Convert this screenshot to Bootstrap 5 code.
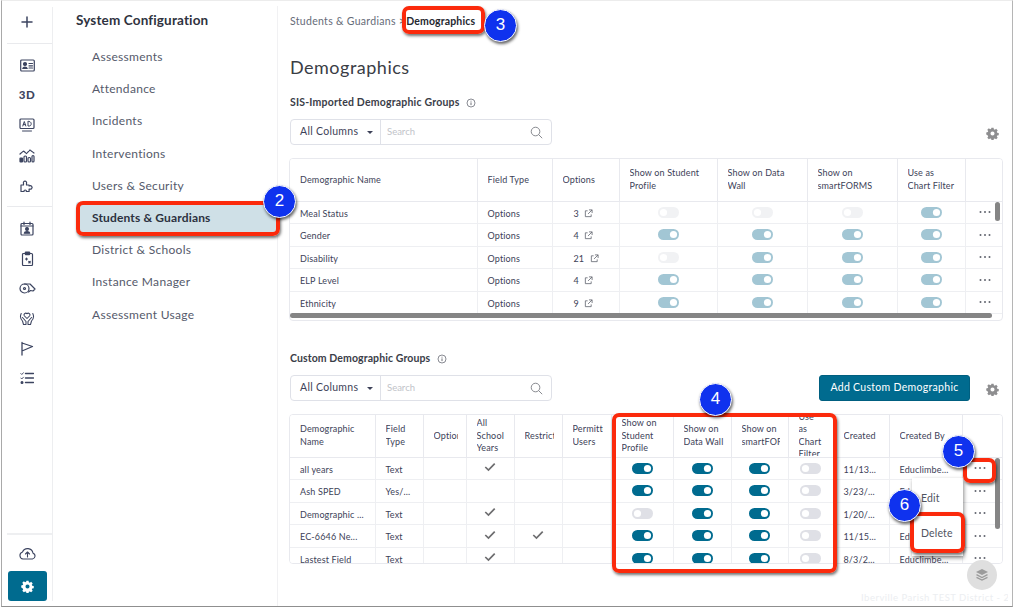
<!DOCTYPE html>
<html lang="en">
<head>
<meta charset="utf-8">
<title>Demographics</title>
<link href="https://cdn.jsdelivr.net/npm/bootstrap@5.3.0/dist/css/bootstrap.min.css" rel="stylesheet">
<style>
html,body{height:100%;overflow:hidden;background:#fff}
body{font-family:"Lato","Liberation Sans",sans-serif;color:#3d4258;letter-spacing:.15px}
.shell{position:relative;width:1012px;height:607px;margin-left:1px;border-left:1.5px solid #a9a9a9;border-bottom:1.5px solid #8f8f8f;border-right:1px solid #b5b5b5;border-top:1px solid #ececec;overflow:hidden;background:#fff}
.rail{width:51px;flex:none;margin-top:6px;margin-bottom:5px;border-right:1px solid #edeef0;color:#3c4460}
.rail-top{height:32px;margin-top:0}
.rail-sep{height:1px;background:#e9eaed;margin-left:5px;margin-top:6px}
.rail-group{padding-top:6px}
.rail-item{height:30px;display:flex;align-items:center;justify-content:center}
.rail-item svg{fill:none;stroke:#3c4460;stroke-width:1.2;stroke-linecap:round;stroke-linejoin:round}
.rail-3d{font-size:11.5px;font-weight:900;color:#3c4460;letter-spacing:.6px}
.rail-sep2{height:2px;background:#eeeff1;margin-left:5px}
.rail-cloud{height:36px;display:flex;align-items:center;justify-content:center}
.rail-cloud svg{fill:none;stroke:#3c4460;stroke-width:1.1;stroke-linecap:round;stroke-linejoin:round}
.rail-gear{width:39px;height:30px;margin-left:6px;background:#006b8f;border-radius:3px;display:flex;align-items:center;justify-content:center;border:0;padding:0}
.confnav{width:225px;flex:none;margin-top:5px;border-right:1px solid #f1f1f3;padding-left:23px}
.confnav-title{font-size:13.5px;font-weight:700;color:#2f3340;line-height:18px;margin-top:5px;margin-bottom:12px;letter-spacing:.15px}
.confnav-item{display:block;height:32.2px;line-height:32px;padding-left:16px;margin-right:-1px;font-size:12px;color:#555a6b;text-decoration:none;letter-spacing:.3px}
.confnav-item.sel{background:#cfe0e7;color:#2c3140;font-weight:700;border-radius:3px;letter-spacing:.15px}
.content{flex:1;min-width:0;padding:12px 8px 0 12px}
.crumbs{font-size:10.5px;line-height:16px;color:#666b78;letter-spacing:.3px}
.crumbs b{color:#25282f;font-weight:700;letter-spacing:.15px;margin-left:-2px}
.page-head{font-size:18px;font-weight:400;line-height:24px;color:#3a3d45;margin:26px 0 0;letter-spacing:.5px}
.sec-head{font-size:10.5px;font-weight:700;line-height:14px;color:#3a3d48;margin:16px 0 0;letter-spacing:.2px}
.sec-head.sec-b{margin-top:30px;letter-spacing:.1px}
.sec-head svg,.cog svg{vertical-align:-2px}
.tools{margin-top:10px;height:26px}
.filterbox{width:262px;height:26px;border:1px solid #dfe1e8;border-radius:4px;font-size:10.5px;background:#fff}
.filter-sel{width:90px;flex:none;height:100%;border-right:1px solid #dfe1e8;padding-left:9px;color:#3d4258;letter-spacing:.3px;font-size:10.5px}
.filter-caret{width:0;height:0;border-left:3.5px solid transparent;border-right:3.5px solid transparent;border-top:3.5px solid #3d4258;margin-left:auto;margin-right:7px}
.filter-input{flex:1;min-width:0;border:0;background:transparent;font-size:9.5px;padding:0 0 0 6px;color:#bbb;outline:0}
.filter-input::placeholder{color:#c1c3c9;opacity:1}
.cog{color:#8e8e90;margin-right:5px}
.add-btn{background:#006b8f;border:1px solid #005f80;color:#fff;font-size:10.5px;height:26px;width:151px;padding:0;border-radius:3px;margin-right:16px;letter-spacing:.3px}
.add-btn:hover{background:#006b8f;color:#fff}
.gridbox{position:relative;width:714px;margin-top:13px;margin-left:-1px;border:1px solid #e8e9ee;border-radius:4px;overflow:hidden;background:#fff}
.gridbox-a{height:163px}
.gridbox-b{height:150px}
.gridtab{table-layout:fixed;width:714px;margin:0;font-size:9px;color:#3d4258;border-collapse:collapse}
.gridtab th,.gridtab td{border:0;border-right:1px solid #eeeff2;border-bottom:1px solid #eeeff2;padding:3px 9px 0 10px;vertical-align:middle;white-space:nowrap;font-weight:400;color:#3d4258;background:#fff;box-shadow:none}
.gridtab th{height:42px;padding:0;white-space:normal;border-bottom-color:#e8e9ee;line-height:12.3px;border-right-color:#e8e9ee}
.gridtab td{height:22.5px;line-height:12px}
.gridtab tr>*:last-child{border-right:0}
.th-in{height:41px;display:flex;align-items:center;overflow:hidden;margin:0 9px 0 10px}
.th-in.q{margin-right:8px}
.th-in.w{margin-right:6px}
.gridtab td.num-link{padding-left:21px}
.num-link svg{margin-left:3px;vertical-align:-1px}
.cellc{text-align:center;padding:0!important}
.tog.form-check-input{float:none;margin:0;width:21px;height:11px;border:0;border-radius:6px;display:block;margin-left:auto;margin-right:auto;box-shadow:none;background-position:left center;background-size:contain;background-image:url("data:image/svg+xml,%3csvg xmlns='http://www.w3.org/2000/svg' viewBox='-4 -4 8 8'%3e%3ccircle r='2.6' fill='%23fff'/%3e%3c/svg%3e");background-color:#dfe0e6}
.tog.form-check-input:checked{background-position:right center;background-color:#006b8f}
.tog-pale.form-check-input{background-color:#f1f2f4}
.tog-pale.form-check-input:checked{background-color:#a2c6d4}
.gridtab .dots{display:block;margin:0 auto;fill:#62656f}
.gridbox-b.gridbox .dots{margin-left:11px}
.checkmk{fill:none;stroke:#6e6e70;stroke-width:2;display:block;margin:-2px auto 0}
.sb-h{position:absolute;left:0;bottom:2px;width:702px;height:5px;background:#858585;border-radius:3px}
.sb-v{position:absolute;right:2px;width:5px;background:#858585;border-radius:3px}
.sb-v1{top:43px;height:19px}
.sb-v2{top:43px;height:71px}
.ca2{width:75px}.ca3{width:67px}.ca4{width:98px}.ca5{width:90px}.ca6{width:90px}.ca7{width:68px}.ca8{width:39px}
.ca0{width:187px}
.cb1{width:85px}.cb2{width:48px}.cb3{width:43px}.cb4{width:48px}.cb5{width:48px}.cb6{width:49px}.cb7{width:62px}.cb8{width:58px}.cb9{width:57px}.cb10{width:45px}.cb11{width:56px}.cb12{width:73px}.cb13{width:42px}
.flyout{position:absolute;left:910px;top:477px;width:51px;height:78px;background:#fff;box-shadow:1px 2px 4px rgba(0,0,0,.45);font-size:10.5px;color:#50545f;z-index:3;padding-top:8px}
.flyout a{display:block;padding-left:9px;height:35px;line-height:24px;color:#50545f;text-decoration:none}
.hilite{position:absolute;border:4px solid #fb2a0c;border-radius:7px;box-shadow:1px 2px 3px rgba(0,0,0,.55);z-index:4;pointer-events:none}
.h2{left:74px;top:200px;width:204px;height:35px}
.h3{left:400px;top:5px;width:83px;height:28px}
.h4{left:610px;top:412px;width:225px;height:160px}
.h5{left:961px;top:457px;width:33px;height:25px}
.h6{left:908px;top:511px;width:55px;height:41px}
.pin{position:absolute;width:33px;height:33px;border-radius:50%;background:#0f32ee;border:1.5px solid #fff;box-shadow:1px 2px 3px rgba(0,0,0,.6);color:#fff;font:400 17px/30px "Liberation Sans",sans-serif;letter-spacing:0;text-align:center;z-index:5}
.p2{left:261px;top:184px}
.p3{left:482px;top:8px}
.p4{left:697px;top:382px}
.p5{left:940px;top:434px}
.p6{left:886px;top:488px}
.fab{position:absolute;left:965px;top:559px;width:30px;height:30px;border-radius:50%;background:#dfdfdf;display:flex;align-items:center;justify-content:center;z-index:2}
.tenant{position:absolute;left:859px;top:590px;width:147px;overflow:hidden;white-space:nowrap;font-size:9.5px;color:#eceef1;line-height:14px;letter-spacing:.5px}
</style>
</head>
<body>
<svg width="0" height="0" class="position-absolute">
<defs>
<symbol id="i-dots" viewBox="0 0 12 4"><circle cx="1.5" cy="2" r="1"/><circle cx="6" cy="2" r="1"/><circle cx="10.5" cy="2" r="1"/></symbol>
<symbol id="i-ext" viewBox="0 0 10 10"><path d="M4 2H1.5v6.5H8V6M5.5 1H9v3.500M9 1 4.500 5.500" fill="none" stroke="#62656f" stroke-width=".9"/></symbol>
<symbol id="i-check" viewBox="0 0 14 11"><path d="M1.500 5.500 5.200 9 12.500 1.500"/></symbol>
<symbol id="i-gear" viewBox="0 0 16 16"><path fill="currentColor" fill-rule="evenodd" d="M6.700 1h2.600l.4 1.900 1.200.5 1.600-1.100 1.900 1.900-1.100 1.600.5 1.200 1.900.4v2.600l-1.900.4-.5 1.200 1.100 1.600-1.900 1.900-1.600-1.100-1.200.5-.4 1.900H6.700l-.4-1.900-1.200-.5-1.600 1.100-1.900-1.900 1.100-1.600-.5-1.200L.3 9.300V6.700l1.900-.4.500-1.200L1.600 3.500l1.900-1.900 1.600 1.100 1.200-.5zM8 5.500a2.500 2.500 0 1 0 0 5 2.500 2.500 0 0 0 0-5z"/></symbol>
<symbol id="i-info" viewBox="0 0 12 12"><circle cx="6" cy="6" r="4.800" fill="none" stroke="#62656f" stroke-width=".9"/><path d="M6 5.300v3.200M6 3.300v1" stroke="#62656f" stroke-width="1.100"/></symbol>
<symbol id="i-search" viewBox="0 0 16 16"><circle cx="6.800" cy="6.800" r="5.300" fill="none" stroke="#6d6f76" stroke-width="1"/><path d="m10.700 10.700 4.300 4.300" stroke="#6d6f76" stroke-width="1"/></symbol>
</defs>
</svg>

<div class="shell d-flex">
  <aside class="rail d-flex flex-column">
    <div class="rail-item rail-top"><svg width="12" height="12" viewBox="0 0 12 12"><path d="M6 1v10M1 6h10" stroke-width="1.500"/></svg></div>
    <div class="rail-sep"></div>
    <div class="rail-group">
      <div class="rail-item"><svg width="15" height="13" viewBox="0 0 15 13"><rect x=".7" y="1" width="13.600" height="11" rx="1"/><circle cx="5" cy="5" r="1.500" fill="#3c4460"/><path d="M2.800 9.500c.3-2 4-2 4.400 0zM9 4.500h3.500M9 6.800h3.500M9 9h3.500" fill="#3c4460"/></svg></div>
      <div class="rail-item"><span class="rail-3d">3D</span></div>
      <div class="rail-item"><svg width="16" height="15" viewBox="0 0 16 15"><rect x="1" y="1" width="14" height="9.500" rx="1"/><path d="M3.800 8 5.300 3.500 6.800 8M4.300 6.600h2M9 3.500V8h1.300c2.600 0 2.600-4.500 0-4.500zM3.500 13h9" stroke-width="1"/></svg></div>
      <div class="rail-item"><svg width="16" height="15" viewBox="0 0 16 15"><path d="M1 6l3.500-3 3 2.500L11 2l4 3" stroke-dasharray="1.600 .9"/><rect x="1" y="10" width="2.500" height="4" rx=".5" fill="#3c4460"/><rect x="5" y="8" width="2.500" height="6" rx="1"/><rect x="9" y="9.500" width="2.500" height="4.500" rx="1"/><rect x="13" y="7.500" width="2" height="6.500" rx="1"/></svg></div>
      <div class="rail-item"><svg width="15" height="15" viewBox="0 0 15 15"><path d="M1 7h2.500V5.200a1.600 1.600 0 1 1 3 0V7h2.600v1a1.700 1.700 0 1 1 2.200 3c-.5.300-1.200 0-2.200 0v2.500H6.300c.5-2-2.600-2-2.300 0H1z"/></svg></div>
    </div>
    <div class="rail-sep"></div>
    <div class="rail-group">
      <div class="rail-item"><svg width="14" height="15" viewBox="0 0 14 15"><rect x="1" y="2.500" width="12" height="11.500" rx="1"/><path d="M4 1v2.500M10 1v2.500M1 5h12"/><circle cx="7" cy="8" r="1.400" fill="#3c4460"/><path d="M4.300 12.200c.3-2 5.100-2 5.400 0z" fill="#3c4460"/></svg></div>
      <div class="rail-item"><svg width="13" height="15" viewBox="0 0 13 15"><rect x="1.500" y="2.500" width="10" height="12" rx="1"/><rect x="4.300" y="1" width="4.400" height="2.600" rx=".6" fill="#3c4460"/><path d="M4.500 8h2M5.500 7v2M7.800 10.500l1.400 1.400M9.200 10.500l-1.400 1.400"/></svg></div>
      <div class="rail-item"><svg width="17" height="13" viewBox="0 0 17 13"><circle cx="5.500" cy="6.500" r="4.500"/><path d="M5.500 2H11l5 5-2 2-2.500-.5-2 1.500"/><circle cx="5.500" cy="6.500" r="1"/></svg></div>
      <div class="rail-item"><svg width="16" height="15" viewBox="0 0 16 15"><path d="M8 7.500 5.500 5a1.700 1.700 0 0 1 2.500-2.300A1.700 1.700 0 0 1 10.500 5zM2.200 2.500C.8 5.500 1.500 8 3.500 10l1 3.500H7v-3L3.500 6.500M13.800 2.500c1.400 3 .7 5.500-1.300 7.500l-1 3.500H9v-3l3.500-4" stroke-width="1.050"/></svg></div>
      <div class="rail-item"><svg width="14" height="15" viewBox="0 0 14 15"><path d="M2 1.500v12.500M2 2l10.500 3.500L2 10" stroke-width="1.300"/></svg></div>
      <div class="rail-item"><svg width="14" height="12" viewBox="0 0 14 12"><path d="M5.500 1.500H13.500M5.500 6H13.500M5.500 10.500H13.500" stroke-width="1.400"/><path d="M.8 1.500l1 1L3.400.7M.8 6l1 1 1.600-1.800" stroke-width=".9"/><circle cx="2" cy="10.500" r=".9" fill="#3c4460"/></svg></div>
    </div>
    <div class="mt-auto rail-sep2"></div>
    <div class="rail-cloud"><svg width="17" height="13" viewBox="0 0 17 13"><path d="M4 12h9.500a3 3 0 0 0 .5-5.800A5.500 5.500 0 0 0 3.500 5 3.600 3.600 0 0 0 4 12zM8.500 10V5M6.500 7l2-2 2 2"/></svg></div>
    <button class="rail-gear" type="button" aria-label="Settings"><svg width="13" height="13" class="text-white"><use href="#i-gear"/></svg></button>
  </aside>

  <nav class="confnav">
    <div class="confnav-title">System Configuration</div>
    <a class="confnav-item" href="#">Assessments</a>
    <a class="confnav-item" href="#">Attendance</a>
    <a class="confnav-item" href="#">Incidents</a>
    <a class="confnav-item" href="#">Interventions</a>
    <a class="confnav-item" href="#">Users &amp; Security</a>
    <a class="confnav-item sel" href="#">Students &amp; Guardians</a>
    <a class="confnav-item" href="#">District &amp; Schools</a>
    <a class="confnav-item" href="#">Instance Manager</a>
    <a class="confnav-item" href="#">Assessment Usage</a>
  </nav>

  <main class="content">
    <div class="crumbs">Students &amp; Guardians &gt; <b>Demographics</b></div>
    <h1 class="page-head">Demographics</h1>

    <h2 class="sec-head">SIS-Imported Demographic Groups <svg width="10" height="10" class="ms-1"><use href="#i-info"/></svg></h2>
    <div class="tools d-flex align-items-center justify-content-between">
      <div class="filterbox d-flex align-items-center">
        <div class="filter-sel d-flex align-items-center">All Columns<span class="filter-caret"></span></div>
        <input class="filter-input" placeholder="Search" aria-label="Search">
        <svg width="13" height="13" class="me-2 flex-none"><use href="#i-search"/></svg>
      </div>
      <span class="cog"><svg width="13" height="13"><use href="#i-gear"/></svg></span>
    </div>
    <div class="gridbox gridbox-a">
      <table class="table gridtab">
        <colgroup><col class="ca0"><col class="ca2"><col class="ca3"><col class="ca4"><col class="ca5"><col class="ca6"><col class="ca7"><col class="ca8"></colgroup>
        <thead><tr>
          <th><div class="th-in">Demographic Name</div></th><th><div class="th-in">Field Type</div></th><th><div class="th-in">Options</div></th><th><div class="th-in">Show on Student Profile</div></th><th><div class="th-in">Show on Data Wall</div></th><th><div class="th-in">Show on smartFORMS</div></th><th><div class="th-in">Use as Chart Filter</div></th><th></th>
        </tr></thead>
        <tbody>
          <tr><td>Meal Status</td><td>Options</td><td class="num-link">3 <svg width="9" height="9"><use href="#i-ext"/></svg></td><td class="cellc"><input class="form-check-input tog tog-pale" type="checkbox" role="switch" aria-label="Profile"></td><td class="cellc"><input class="form-check-input tog tog-pale" type="checkbox" role="switch" aria-label="Wall"></td><td class="cellc"><input class="form-check-input tog tog-pale" type="checkbox" role="switch" aria-label="Forms"></td><td class="cellc"><input class="form-check-input tog tog-pale" type="checkbox" role="switch" aria-label="Filter" checked></td><td class="cellc"><svg class="dots" width="12" height="4"><use href="#i-dots"/></svg></td></tr>
          <tr><td>Gender</td><td>Options</td><td class="num-link">4 <svg width="9" height="9"><use href="#i-ext"/></svg></td><td class="cellc"><input class="form-check-input tog tog-pale" type="checkbox" role="switch" aria-label="Profile" checked></td><td class="cellc"><input class="form-check-input tog tog-pale" type="checkbox" role="switch" aria-label="Wall" checked></td><td class="cellc"><input class="form-check-input tog tog-pale" type="checkbox" role="switch" aria-label="Forms" checked></td><td class="cellc"><input class="form-check-input tog tog-pale" type="checkbox" role="switch" aria-label="Filter" checked></td><td class="cellc"><svg class="dots" width="12" height="4"><use href="#i-dots"/></svg></td></tr>
          <tr><td>Disability</td><td>Options</td><td class="num-link">21 <svg width="9" height="9"><use href="#i-ext"/></svg></td><td class="cellc"><input class="form-check-input tog tog-pale" type="checkbox" role="switch" aria-label="Profile"></td><td class="cellc"><input class="form-check-input tog tog-pale" type="checkbox" role="switch" aria-label="Wall" checked></td><td class="cellc"><input class="form-check-input tog tog-pale" type="checkbox" role="switch" aria-label="Forms" checked></td><td class="cellc"><input class="form-check-input tog tog-pale" type="checkbox" role="switch" aria-label="Filter" checked></td><td class="cellc"><svg class="dots" width="12" height="4"><use href="#i-dots"/></svg></td></tr>
          <tr><td>ELP Level</td><td>Options</td><td class="num-link">4 <svg width="9" height="9"><use href="#i-ext"/></svg></td><td class="cellc"><input class="form-check-input tog tog-pale" type="checkbox" role="switch" aria-label="Profile" checked></td><td class="cellc"><input class="form-check-input tog tog-pale" type="checkbox" role="switch" aria-label="Wall" checked></td><td class="cellc"><input class="form-check-input tog tog-pale" type="checkbox" role="switch" aria-label="Forms" checked></td><td class="cellc"><input class="form-check-input tog tog-pale" type="checkbox" role="switch" aria-label="Filter" checked></td><td class="cellc"><svg class="dots" width="12" height="4"><use href="#i-dots"/></svg></td></tr>
          <tr><td>Ethnicity</td><td>Options</td><td class="num-link">9 <svg width="9" height="9"><use href="#i-ext"/></svg></td><td class="cellc"><input class="form-check-input tog tog-pale" type="checkbox" role="switch" aria-label="Profile" checked></td><td class="cellc"><input class="form-check-input tog tog-pale" type="checkbox" role="switch" aria-label="Wall" checked></td><td class="cellc"><input class="form-check-input tog tog-pale" type="checkbox" role="switch" aria-label="Forms" checked></td><td class="cellc"><input class="form-check-input tog tog-pale" type="checkbox" role="switch" aria-label="Filter" checked></td><td class="cellc"><svg class="dots" width="12" height="4"><use href="#i-dots"/></svg></td></tr>
        </tbody>
      </table>
      <span class="sb-h"></span><span class="sb-v sb-v1"></span>
    </div>

    <h2 class="sec-head sec-b">Custom Demographic Groups <svg width="10" height="10" class="ms-1"><use href="#i-info"/></svg></h2>
    <div class="tools d-flex align-items-center">
      <div class="filterbox d-flex align-items-center">
        <div class="filter-sel d-flex align-items-center">All Columns<span class="filter-caret"></span></div>
        <input class="filter-input" placeholder="Search" aria-label="Search">
        <svg width="13" height="13" class="me-2 flex-none"><use href="#i-search"/></svg>
      </div>
      <button class="btn add-btn ms-auto" type="button">Add Custom Demographic</button>
      <span class="cog"><svg width="13" height="13"><use href="#i-gear"/></svg></span>
    </div>
    <div class="gridbox gridbox-b">
      <table class="table gridtab">
        <colgroup><col class="cb1"><col class="cb2"><col class="cb3"><col class="cb4"><col class="cb5"><col class="cb6"><col class="cb7"><col class="cb8"><col class="cb9"><col class="cb10"><col class="cb11"><col class="cb12"><col class="cb13"></colgroup>
        <thead><tr>
          <th><div class="th-in">Demographic Name</div></th><th><div class="th-in">Field Type</div></th><th><div class="th-in q">Options</div></th><th><div class="th-in">All School Years</div></th><th><div class="th-in q">Restricted</div></th><th><div class="th-in q">Permitted Users</div></th><th><div class="th-in">Show on Student Profile</div></th><th><div class="th-in w">Show on Data Wall</div></th><th><div class="th-in q">Show on smartFORMS</div></th><th><div class="th-in">Use as Chart Filter</div></th><th><div class="th-in">Created</div></th><th><div class="th-in">Created By</div></th><th></th>
        </tr></thead>
        <tbody>
          <tr><td>all years</td><td>Text</td><td></td><td class="cellc"><svg class="checkmk" width="12" height="10"><use href="#i-check"/></svg></td><td></td><td></td><td class="cellc"><input class="form-check-input tog" type="checkbox" role="switch" aria-label="Profile" checked></td><td class="cellc"><input class="form-check-input tog" type="checkbox" role="switch" aria-label="Wall" checked></td><td class="cellc"><input class="form-check-input tog" type="checkbox" role="switch" aria-label="Forms" checked></td><td class="cellc"><input class="form-check-input tog" type="checkbox" role="switch" aria-label="Filter"></td><td>11/13...</td><td>Educlimbe...</td><td class="cellc"><svg class="dots" width="12" height="4"><use href="#i-dots"/></svg></td></tr>
          <tr><td>Ash SPED</td><td>Yes/...</td><td></td><td></td><td></td><td></td><td class="cellc"><input class="form-check-input tog" type="checkbox" role="switch" aria-label="Profile" checked></td><td class="cellc"><input class="form-check-input tog" type="checkbox" role="switch" aria-label="Wall" checked></td><td class="cellc"><input class="form-check-input tog" type="checkbox" role="switch" aria-label="Forms" checked></td><td class="cellc"><input class="form-check-input tog" type="checkbox" role="switch" aria-label="Filter"></td><td>3/23/...</td><td>Educlimbe...</td><td class="cellc"><svg class="dots" width="12" height="4"><use href="#i-dots"/></svg></td></tr>
          <tr><td>Demographic ...</td><td>Text</td><td></td><td class="cellc"><svg class="checkmk" width="12" height="10"><use href="#i-check"/></svg></td><td></td><td></td><td class="cellc"><input class="form-check-input tog" type="checkbox" role="switch" aria-label="Profile"></td><td class="cellc"><input class="form-check-input tog" type="checkbox" role="switch" aria-label="Wall" checked></td><td class="cellc"><input class="form-check-input tog" type="checkbox" role="switch" aria-label="Forms" checked></td><td class="cellc"><input class="form-check-input tog" type="checkbox" role="switch" aria-label="Filter"></td><td>1/20/...</td><td>Educlimbe...</td><td class="cellc"><svg class="dots" width="12" height="4"><use href="#i-dots"/></svg></td></tr>
          <tr><td>EC-6646 Ne...</td><td>Text</td><td></td><td class="cellc"><svg class="checkmk" width="12" height="10"><use href="#i-check"/></svg></td><td class="cellc"><svg class="checkmk" width="12" height="10"><use href="#i-check"/></svg></td><td></td><td class="cellc"><input class="form-check-input tog" type="checkbox" role="switch" aria-label="Profile" checked></td><td class="cellc"><input class="form-check-input tog" type="checkbox" role="switch" aria-label="Wall" checked></td><td class="cellc"><input class="form-check-input tog" type="checkbox" role="switch" aria-label="Forms" checked></td><td class="cellc"><input class="form-check-input tog" type="checkbox" role="switch" aria-label="Filter"></td><td>11/15...</td><td>Educlimbe...</td><td class="cellc"><svg class="dots" width="12" height="4"><use href="#i-dots"/></svg></td></tr>
          <tr><td>Lastest Field</td><td>Text</td><td></td><td class="cellc"><svg class="checkmk" width="12" height="10"><use href="#i-check"/></svg></td><td></td><td></td><td class="cellc"><input class="form-check-input tog" type="checkbox" role="switch" aria-label="Profile" checked></td><td class="cellc"><input class="form-check-input tog" type="checkbox" role="switch" aria-label="Wall" checked></td><td class="cellc"><input class="form-check-input tog" type="checkbox" role="switch" aria-label="Forms" checked></td><td class="cellc"><input class="form-check-input tog" type="checkbox" role="switch" aria-label="Filter"></td><td>8/3/2...</td><td>Educlimbe...</td><td class="cellc"><svg class="dots" width="12" height="4"><use href="#i-dots"/></svg></td></tr>
        </tbody>
      </table>
      <span class="sb-v sb-v2"></span>
    </div>
  </main>

  <div class="flyout"><a href="#">Edit</a><a href="#">Delete</a></div>
  <div class="fab"><svg width="14" height="14" viewBox="0 0 14 14"><path d="M7 1l6 3-6 3-6-3z" fill="#9b9b9b"/><path d="M1.500 6.700 7 9.500l5.500-2.800M1.500 9.300 7 12.100l5.500-2.800" fill="none" stroke="#9b9b9b" stroke-width="1.300"/></svg></div>
  <div class="tenant">Iberville Parish TEST District - 2</div>

  <span class="hilite h2"></span><span class="hilite h3"></span><span class="hilite h4"></span><span class="hilite h5"></span><span class="hilite h6"></span>
  <span class="pin p2">2</span><span class="pin p3">3</span><span class="pin p4">4</span><span class="pin p5">5</span><span class="pin p6">6</span>
</div>
<script src="https://cdn.jsdelivr.net/npm/bootstrap@5.3.0/dist/js/bootstrap.bundle.min.js"></script>
</body>
</html>
